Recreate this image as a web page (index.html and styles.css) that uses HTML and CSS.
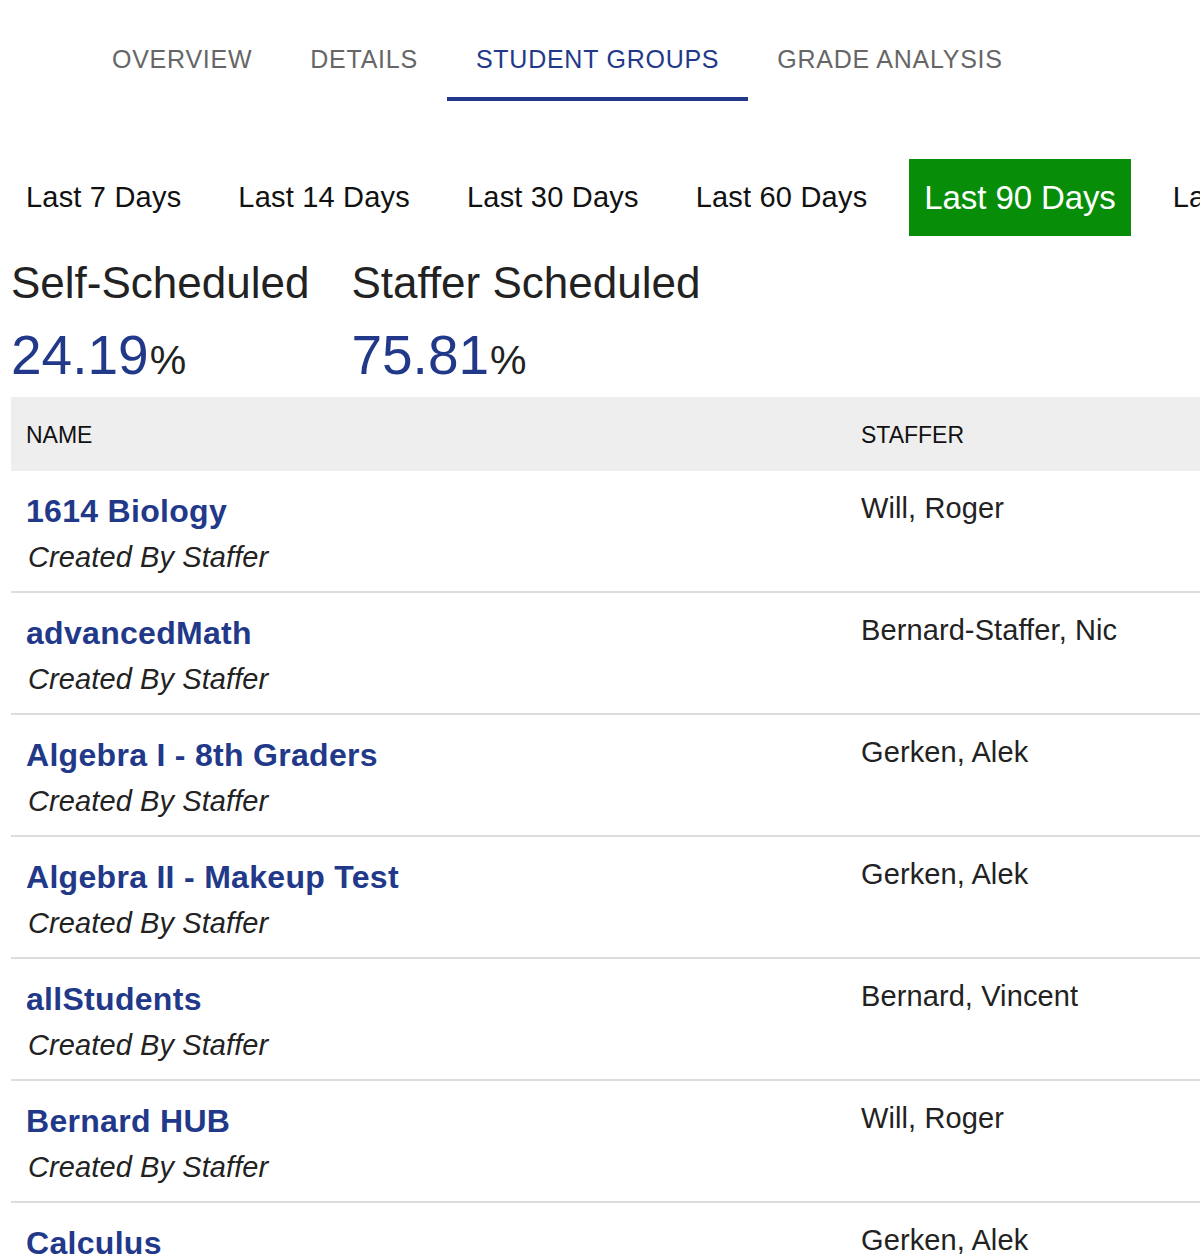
FILE: index.html
```html
<!DOCTYPE html>
<html lang="en">

<head>
    <meta charset="UTF-8">
    <meta name="viewport" content="width=device-width, initial-scale=1.0">
    <title>Student Groups</title>
    <link rel="stylesheet" href="styles.css">
</head>

<body>
    <nav class="tabs">
        <a class="tab" href="#">OVERVIEW</a>
        <a class="tab" href="#">DETAILS</a>
        <a class="tab active" href="#">STUDENT GROUPS</a>
        <a class="tab" href="#">GRADE ANALYSIS</a>
    </nav>

    <div class="page">
        <div class="ranges">
            <button class="range">Last 7 Days</button>
            <button class="range">Last 14 Days</button>
            <button class="range">Last 30 Days</button>
            <button class="range">Last 60 Days</button>
            <button class="range active">Last 90 Days</button>
            <button class="range">Last 180 Days</button>
        </div>

        <div class="stats">
            <div class="stat">
                <h2>Self-Scheduled</h2>
                <div class="stat-value">24.19<span class="pct">%</span></div>
            </div>
            <div class="stat">
                <h2>Staffer Scheduled</h2>
                <div class="stat-value">75.81<span class="pct">%</span></div>
            </div>
        </div>

        <div class="table-wrap">
            <table class="groups">
                <thead>
                    <tr>
                        <th class="col-name">NAME</th>
                        <th>STAFFER</th>
                    </tr>
                </thead>
                <tbody>
                    <tr>
                        <td><a class="group-name" href="#">1614 Biology</a><div class="group-sub">Created By Staffer</div></td>
                        <td class="staffer">Will, Roger</td>
                    </tr>
                    <tr>
                        <td><a class="group-name" href="#">advancedMath</a><div class="group-sub">Created By Staffer</div></td>
                        <td class="staffer">Bernard-Staffer, Nic</td>
                    </tr>
                    <tr>
                        <td><a class="group-name" href="#">Algebra I - 8th Graders</a><div class="group-sub">Created By Staffer</div></td>
                        <td class="staffer">Gerken, Alek</td>
                    </tr>
                    <tr>
                        <td><a class="group-name" href="#">Algebra II - Makeup Test</a><div class="group-sub">Created By Staffer</div></td>
                        <td class="staffer">Gerken, Alek</td>
                    </tr>
                    <tr>
                        <td><a class="group-name" href="#">allStudents</a><div class="group-sub">Created By Staffer</div></td>
                        <td class="staffer">Bernard, Vincent</td>
                    </tr>
                    <tr>
                        <td><a class="group-name" href="#">Bernard HUB</a><div class="group-sub">Created By Staffer</div></td>
                        <td class="staffer">Will, Roger</td>
                    </tr>
                    <tr>
                        <td><a class="group-name" href="#">Calculus</a><div class="group-sub">Created By Staffer</div></td>
                        <td class="staffer">Gerken, Alek</td>
                    </tr>
                </tbody>
            </table>
        </div>
    </div>
</body>

</html>
```

FILE: styles.css
```css
html,
body {
    margin: 0;
    overflow: hidden;
}

body {
    font-family: "Liberation Sans", Arial, sans-serif;
    color: #222;
    background: #fff;
}

/* top tabs */
.tabs {
    display: flex;
    padding-left: 83px;
}

.tab {
    display: block;
    padding: 44px 29px 23px;
    font-size: 25px;
    line-height: 30px;
    letter-spacing: 0.75px;
    color: #666;
    text-decoration: none;
    border-bottom: 4px solid transparent;
}

.tab.active {
    color: #22398a;
    border-bottom-color: #22398a;
}

.page {
    padding-left: 11px;
}

/* date ranges */
.ranges {
    display: flex;
    align-items: center;
    gap: 27px;
    margin-top: 58px;
    white-space: nowrap;
    overflow: hidden;
}

.range {
    flex: none;
    padding: 20px 15px;
    font-family: inherit;
    font-size: 29px;
    line-height: 37px;
    letter-spacing: 0.2px;
    color: #111;
    background: none;
    border: none;
    cursor: pointer;
}

.range.active {
    font-size: 33px;
    padding: 20px 15px;
    letter-spacing: -0.1px;
    color: #fff;
    background-color: #078d07;
}

/* stats */
.stats {
    display: flex;
    gap: 42px;
    margin-top: 22px;
}

.stat h2 {
    margin: 0;
    font-size: 44px;
    line-height: 50px;
    font-weight: normal;
    color: #222;
}

.stat-value {
    margin-top: 17px;
    font-size: 55px;
    line-height: 60px;
    color: #22398a;
}

.stat-value .pct {
    margin-left: 1px;
    font-size: 41px;
    color: #222;
}

/* table */
.table-wrap {
    margin-top: 7px;
    overflow: hidden;
}

.groups {
    width: 1400px;
    border-collapse: collapse;
}

.groups th {
    background-color: #eee;
    text-align: left;
    font-weight: normal;
    font-size: 23px;
    line-height: 28px;
    padding: 24px 15px 22px;
    color: #111;
}

.groups th.col-name {
    width: 805px;
}

.groups td {
    vertical-align: top;
    padding: 21px 15px 15px;
    border-bottom: 2px solid #ddd;
    font-size: 29px;
    line-height: 38px;
    color: #222;
}

.groups td.staffer {
    padding-top: 18px;
    letter-spacing: 0.1px;
}

.group-name {
    display: block;
    font-size: 32px;
    line-height: 38px;
    font-weight: bold;
    letter-spacing: 0.3px;
    color: #22398a;
    text-decoration: none;
}

.group-sub {
    margin-top: 8px;
    padding-left: 2px;
    font-style: italic;
    font-size: 29px;
    line-height: 38px;
    letter-spacing: 0.1px;
}
```
